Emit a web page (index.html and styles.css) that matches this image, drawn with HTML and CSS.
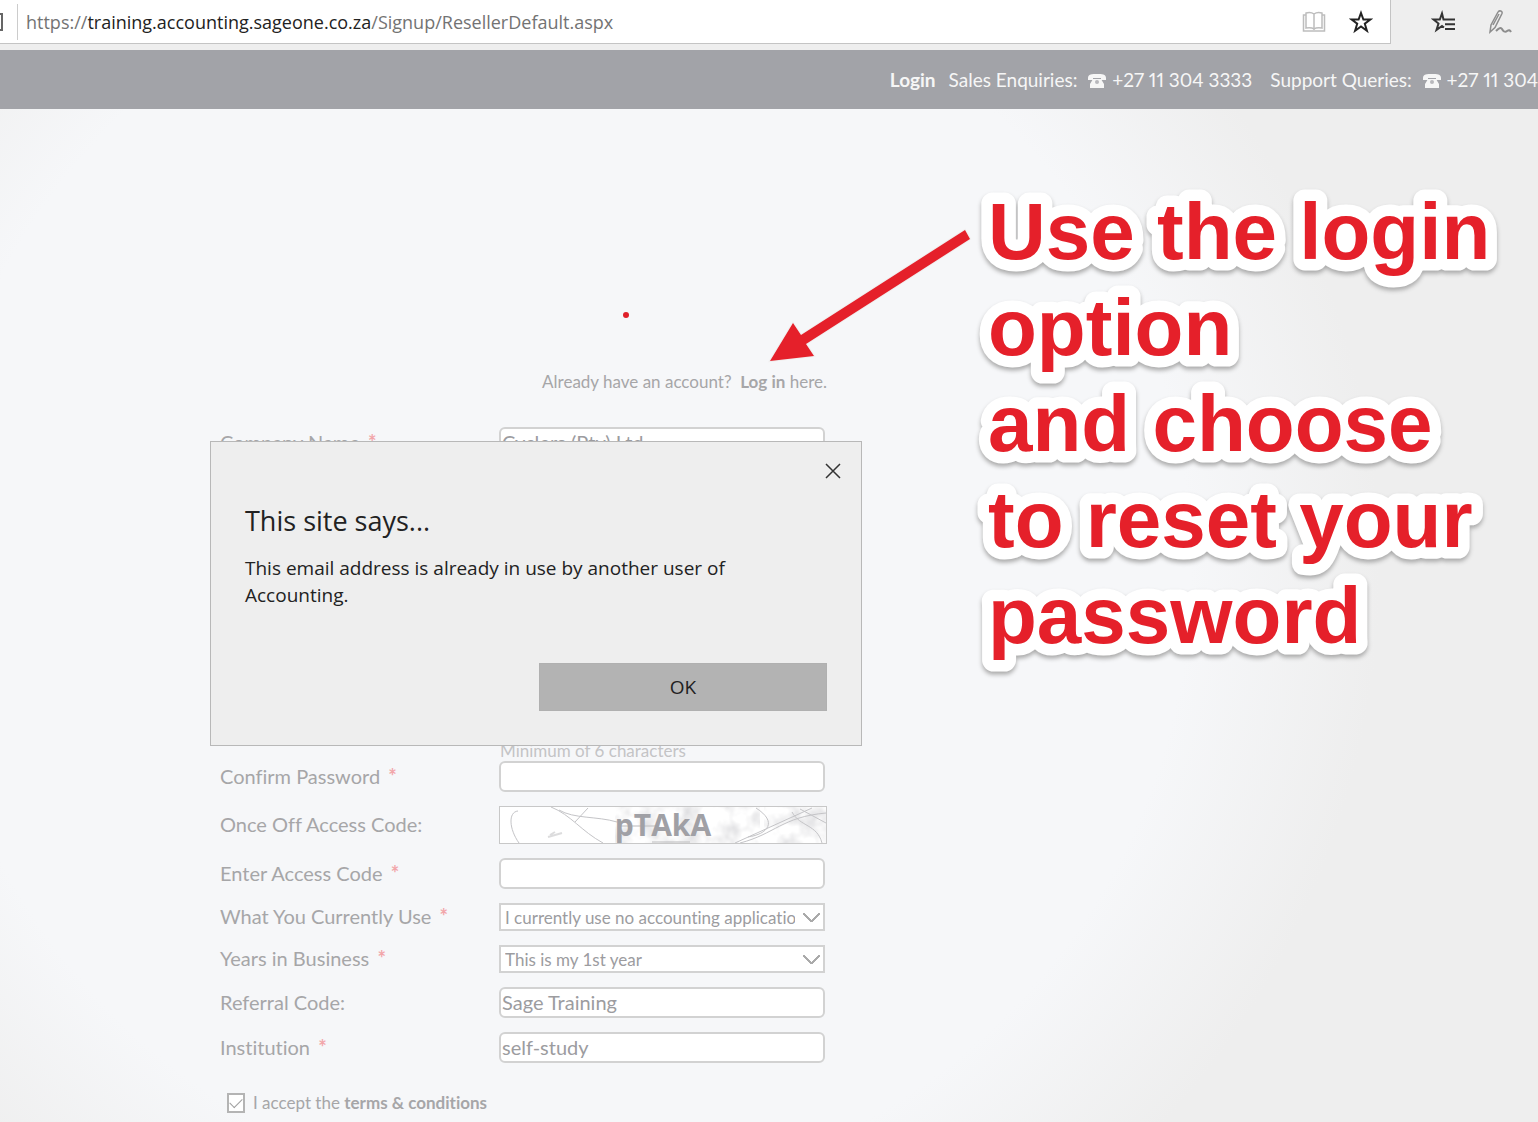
FILE: index.html
```html
<!DOCTYPE html>
<html lang="en">
<head>
    <meta charset="utf-8">
    <title>Sign Up</title>
    <link rel="stylesheet" href="styles.css">
</head>
<body>
    <div class="browser-bar">
        <div class="address">
            <span class="tab-edge"></span>
            <span class="url">https://<b>training.accounting.sageone.co.za</b>/Signup/ResellerDefault.aspx</span>
            <svg class="icon-book" width="24" height="22" viewBox="0 0 24 22" fill="none" stroke="#bdbdbd" stroke-width="1.5">
                <path d="M12 3v16M12 3C10 1.500 6 1.500 4 2v15c3-.5 6-.5 8 1 2-1.500 5-1.500 8-1V2c-2-.5-6-.5-8 1z"/>
                <path d="M4 4H1.500v16h21V4H20"/>
            </svg>
            <svg width="24" height="24" viewBox="0 0 24 24" fill="none" stroke="#222" stroke-width="2">
                <path d="M12 3l2.400 6.500h7l-5.600 4.200 2.100 7L12 16.500l-5.900 4.200 2.100-7L2.600 9.500h7z"/>
            </svg>
        </div>
        <div class="tools">
            <svg width="24" height="24" viewBox="0 0 24 24" fill="none" stroke="#333" stroke-width="2">
                <path d="M14 9.500h-1.500L11 3.500 8.800 9.500H2.500l5 4-2 6.500 5.500-4 2 1.500M12.500 9.500H24M14 14.200h10M14 19h10"/>
            </svg>
            <svg width="26" height="26" viewBox="0 0 26 26" fill="none" stroke="#8d8d8d" stroke-width="1.500">
                <path d="M3 23l1-7L11 3c1-2 5-1 4 1.500L8 18.500 3 23zM6 16l6-11"/>
                <path d="M9 22c3-3 5-4 6-2s3 4 5 2c2-1.500 3-1 4 1" stroke-width="2"/>
            </svg>
        </div>
    </div>

    <svg width="0" height="0" class="symbols">
        <symbol id="phone" viewBox="0 0 20 16">
            <path d="M1 5C1 1 5 1 10 1s9 0 9 4v2h-5V5H6v2H1z"/>
            <path d="M6 6h8l3 5v4H3v-4z"/>
            <circle cx="10" cy="9" r="2" fill="#b8b8bc"/>
        </symbol>
    </svg>

    <header class="top-bar">
        <a class="login" href="#">Login</a>
        <span>Sales Enquiries: <svg class="phone"><use href="#phone"/></svg> +27 11 304 3333</span>
        <span>Support Queries: <svg class="phone"><use href="#phone"/></svg> +27 11 304</span>
    </header>

    <main class="page">
        <form class="signup">
            <p class="account">Already have an account? &nbsp;<a href="#">Log in</a> here.</p>

            <div class="row">
                <label for="company">Company Name <sup>*</sup></label>
                <input class="input-text" type="text" id="company" value="Cyclers (Pty) Ltd">
            </div>

            <p class="hint">Minimum of 6 characters</p>
            <div class="row">
                <label for="confirm">Confirm Password <sup>*</sup></label>
                <input class="input-text" type="password" id="confirm">
            </div>
            <div class="row">
                <span class="label">Once Off Access Code:</span>
                <div class="captcha">
                    <svg width="326" height="36" viewBox="0 0 326 36" fill="none" stroke="#c4c4c7">
                        <defs>
                            <filter id="smudge" x="0" y="0" width="100%" height="100%">
                                <feTurbulence type="fractalNoise" baseFrequency="0.050" numOctaves="3" seed="4"/>
                                <feColorMatrix values="0 0 0 0 .7  0 0 0 0 .7  0 0 0 0 .72  2 0 0 0 -.8"/>
                            </filter>
                        </defs>
                        <rect x="115" y="0" width="145" height="36" filter="url(#smudge)" stroke="none"/>
                        <rect x="264" y="0" width="62" height="36" filter="url(#smudge)" stroke="none"/>
                        <path d="M18 4C8 5 9 22 19 36M51 0c20 8 30 24 52 36M59 3c15 9 38 6 58 12M88 1L75 15M256 1c22 14 12 26-8 29M235 36L312 1M240 36c35-9 42-26 86-30M292 5c8 15 25 12 30 31M300 2l26 14"/>
                        <path d="M152 35h38M120 19h38M48 30l14-4M55 25l-5 3" stroke-width="2" opacity=".6"/>
                    </svg>
                    <span class="code">pTAkA</span>
                </div>
            </div>
            <div class="row">
                <label for="code">Enter Access Code <sup>*</sup></label>
                <input class="input-text" type="text" id="code">
            </div>
            <div class="row">
                <label for="current">What You Currently Use <sup>*</sup></label>
                <select class="select" id="current">
                    <option>I currently use no accounting application</option>
                </select>
            </div>
            <div class="row">
                <label for="years">Years in Business <sup>*</sup></label>
                <select class="select" id="years">
                    <option>This is my 1st year</option>
                </select>
            </div>
            <div class="row">
                <label for="referral">Referral Code:</label>
                <input class="input-text" type="text" id="referral" value="Sage Training">
            </div>
            <div class="row">
                <label for="institution">Institution <sup>*</sup></label>
                <input class="input-text" type="text" id="institution" value="self-study">
            </div>
            <div class="terms">
                <input type="checkbox" id="accept" checked>
                <label for="accept">I accept the <a href="#">terms &amp; conditions</a></label>
            </div>
        </form>
    </main>

    <div class="dialog" role="dialog" aria-labelledby="dialog-title">
        <button class="close" type="button" aria-label="Close">
            <svg width="16" height="16" viewBox="0 0 16 16" stroke="#333" stroke-width="1.500"><path d="M1 1l14 14M15 1L1 15"/></svg>
        </button>
        <h1 id="dialog-title">This site says...</h1>
        <p>This email address is already in use by another user of Accounting.</p>
        <button class="ok" type="button">OK</button>
    </div>

    <svg class="arrow" width="360" height="140" viewBox="0 0 360 140">
        <circle cx="11" cy="90" r="3" fill="#e0202a"/>
        <path d="M350 5l5 9L191 119l8 12-44 5 23-38 8 12z" fill="#e5202a" stroke="#f0eeee" stroke-width="2" paint-order="stroke"/>
    </svg>
    <svg class="callout" width="540" height="520">
        <text y="90">
            <tspan x="18">Use the login</tspan>
            <tspan x="18" dy="96">option</tspan>
            <tspan x="18" dy="96">and choose</tspan>
            <tspan x="18" dy="96">to reset your</tspan>
            <tspan x="18" dy="96">password</tspan>
        </text>
    </svg>
</body>
</html>
```
FILE: styles.css
```css
* {
    box-sizing: border-box;
}

body {
    margin: 0;
    min-height: 100vh;
    position: relative;
    overflow: hidden;
    font-family: Lato, sans-serif;
    font-size: 20px;
    font-variant-ligatures: none;
    color: #a6a6a8;
    background: #eee;
}

p, h1 {
    margin: 0;
}

a {
    color: inherit;
    font-weight: bold;
    text-decoration: none;
}

/* browser chrome */
.browser-bar {
    display: flex;
    height: 50px;
    padding-bottom: 6px;
    font-family: "Open Sans", sans-serif;
    font-size: 18px;
}

.address {
    flex: 1;
    display: flex;
    align-items: center;
    gap: 23px;
    padding-right: 17px;
    background: #fff;
    border: solid #c4c4c4;
    border-width: 0 1px 1px 0;
}

.tab-edge {
    width: 3px;
    height: 18px;
    border: 2px solid #666;
    border-left: none;
}

.url {
    flex: 1;
    position: relative;
    color: #737373;
    white-space: nowrap;
}

.url::before {
    content: "";
    position: absolute;
    left: -9px;
    top: -6px;
    bottom: -6px;
    border-left: 1px solid #ccc;
}

.url b {
    font-weight: normal;
    color: #222;
}

.tools {
    display: flex;
    align-items: center;
    gap: 32px;
    padding: 0 25px 0 40px;
}

.symbols {
    position: absolute;
}

/* page header */
.top-bar {
    display: flex;
    justify-content: flex-end;
    align-items: center;
    height: 59px;
    background: #a2a3a8;
    color: #f6f6f6;
    font-size: 19px;
    font-variant-numeric: proportional-nums;
    white-space: nowrap;
}

.top-bar .login {
    margin-right: 13px;
}

.top-bar span + span {
    margin-left: 18px;
}

.phone {
    width: 20px;
    height: 16px;
    margin-left: 5px;
    vertical-align: -2px;
    fill: #f6f6f6;
}

/* sign up form */
.page {
    padding: 263px 0 13px 220px;
    background: radial-gradient(circle at 560px 460px, #f6f7f9 630px, #eee 820px);
}

.signup {
    width: 607px;
}

.account {
    margin-bottom: 35px;
    line-height: 20px;
    font-size: 17px;
    text-align: right;
}

.row {
    display: grid;
    grid-template-columns: 279px 1fr;
    align-items: center;
    margin-bottom: 14px;
    line-height: 22px;
}

.row label,
.row .label {
    margin-bottom: 2px;
}

sup {
    margin-left: 3px;
    color: #f2a6aa;
    font-size: 20px;
    font-weight: bold;
    line-height: 0;
    vertical-align: baseline;
}

.input-text,
.select {
    width: 326px;
    background-color: #fff;
    border: 2px solid #d2d2d2;
    color: #9c9c9f;
    font-family: inherit;
    font-variant-ligatures: none;
}

.input-text {
    height: 31px;
    padding: 0 1px 2px;
    border-radius: 6px;
    font-size: 20px;
}

.select {
    height: 28px;
    padding: 0 28px 0 4px;
    border-radius: 0;
    font-size: 17px;
    appearance: none;
    background-image: linear-gradient(45deg, transparent 44%, #aaa 44%, #aaa 56%, transparent 56%), linear-gradient(-45deg, transparent 44%, #aaa 44%, #aaa 56%, transparent 56%);
    background-size: 9px 9px;
    background-position: right 11px center, right 3px center;
    background-repeat: no-repeat;
}

.hint {
    margin: 283px 0 0 280px;
    line-height: 20px;
    font-size: 17px;
    color: #c4c4c6;
}

.captcha {
    display: grid;
    height: 38px;
    background: #fff;
    border: 1px solid #c8c8c8;
}

.captcha svg,
.code {
    grid-area: 1 / 1;
}

.code {
    place-self: center;
    font-family: "Open Sans", sans-serif;
    font-size: 30px;
    line-height: 34px;
    font-weight: bold;
    color: #a0a0a5;
}

.terms {
    display: flex;
    align-items: center;
    gap: 8px;
    margin: 30px 0 0 7px;
    line-height: 20px;
    font-size: 17px;
}

.terms input {
    display: grid;
    place-content: center;
    width: 18px;
    height: 20px;
    margin: 0;
    border: 2px solid #b4b4b4;
    background: #fff;
    appearance: none;
}

.terms input:checked::before {
    content: "";
    width: 11px;
    height: 6px;
    margin-bottom: 3px;
    border: solid #a0a0a0;
    border-width: 0 0 1px 1px;
    transform: rotate(-45deg);
}

/* alert */
.dialog {
    position: absolute;
    left: 210px;
    top: 441px;
    width: 652px;
    padding: 61px 34px 34px;
    background: #eee;
    border: 1px solid #b8b8b8;
    font-family: "Open Sans", sans-serif;
    color: #222;
}

.dialog h1 {
    margin-bottom: 16px;
    font-size: 27px;
    line-height: 36px;
    font-weight: normal;
}

.dialog p {
    width: 500px;
    font-size: 19px;
    line-height: 27px;
}

.close {
    position: absolute;
    top: 21px;
    right: 20px;
    display: flex;
    padding: 0;
    background: none;
    border: none;
}

.ok {
    display: block;
    width: 288px;
    height: 48px;
    margin: 54px 0 0 auto;
    background: #b3b3b3;
    border: 1px solid #b0b0b0;
    font-family: inherit;
    font-size: 19px;
    color: #222;
}

/* annotations */
.arrow {
    position: absolute;
    left: 615px;
    top: 225px;
}

.callout {
    position: absolute;
    left: 970px;
    top: 169px;
    font-family: "Liberation Sans", sans-serif;
    font-size: 80px;
    font-weight: bold;
    fill: #e5202a;
    stroke: #fff;
    stroke-width: 23px;
    stroke-linejoin: round;
    paint-order: stroke;
    filter: drop-shadow(0 3px 2px #aaa);
}
```
